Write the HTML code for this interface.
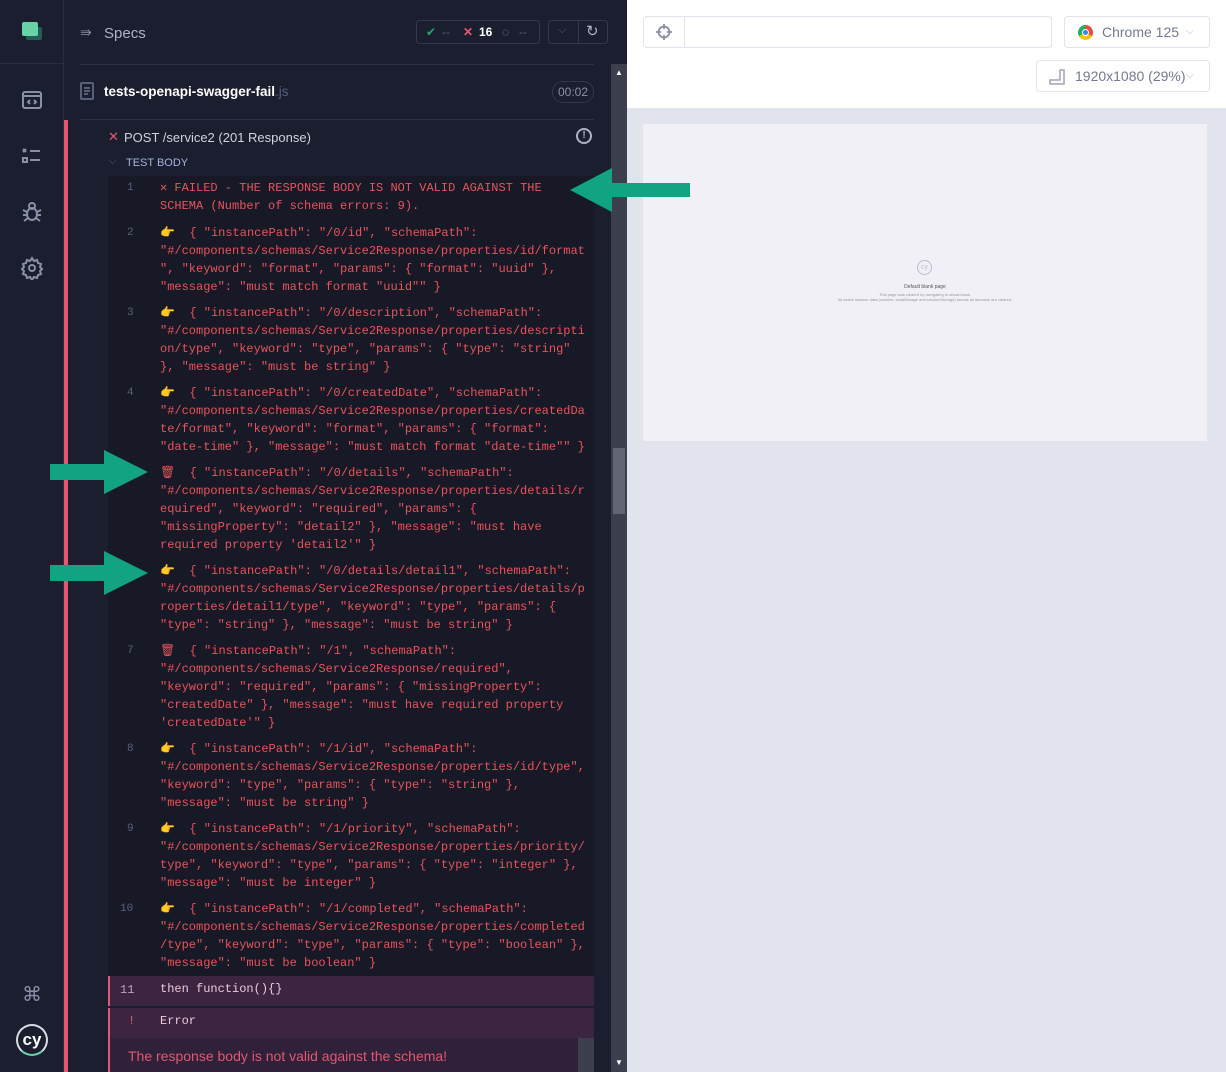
<!DOCTYPE html>
<html><head><meta charset="utf-8"><style>
*{margin:0;padding:0;box-sizing:border-box}
body{width:1226px;height:1072px;overflow:hidden;background:#fff;font-family:"Liberation Sans",sans-serif;position:relative}
.a{position:absolute}
#side{left:0;top:0;width:64px;height:1072px;background:#1b1e2e;border-right:1px solid #2a2d3e}
#panel{left:64px;top:0;width:563px;height:1072px;background:#1b1e2e}
.code{font-family:"Liberation Mono",monospace;font-size:12px;line-height:18px;color:#e8545a}
.ln{font-family:"Liberation Mono",monospace;font-size:11px;color:#5a5f7a;left:127px}
.ent{left:160px;width:430px;white-space:pre}
</style></head><body>
<div id="side" class="a">
  <div class="a" style="left:26px;top:27px;width:16px;height:13px;background:#1f5f57;border-radius:2px"></div>
  <div class="a" style="left:22px;top:22px;width:16px;height:14px;background:#69d3a7;border-radius:2px"></div>
  <div class="a" style="left:0;top:63px;width:64px;height:1px;background:#2a2d3e"></div>
  <svg class="a" style="left:20px;top:88px" width="24" height="24" viewBox="0 0 24 24" fill="none" stroke="#8a8fa8" stroke-width="2"><rect x="3" y="4" width="18" height="16" rx="2"/><path d="M3 8h18M10 12l-2 2 2 2M14 12l2 2-2 2"/></svg>
  <svg class="a" style="left:20px;top:144px" width="24" height="24" viewBox="0 0 24 24" fill="none" stroke="#8a8fa8" stroke-width="2"><path d="M3 5l3 3M6 5l-3 3M10 7h10M10 16h10"/><rect x="3" y="14" width="4" height="4"/></svg>
  <svg class="a" style="left:20px;top:200px" width="24" height="24" viewBox="0 0 24 24" fill="none" stroke="#8a8fa8" stroke-width="2"><ellipse cx="12" cy="14" rx="5" ry="6"/><circle cx="12" cy="6" r="3"/><path d="M3 10l4 2M21 10l-4 2M3 15h4M21 15h-4M4 21l4-3M20 21l-4-3"/></svg>
  <svg class="a" style="left:20px;top:256px" width="24" height="24" viewBox="0 0 24 24" fill="none" stroke="#8a8fa8" stroke-width="2"><circle cx="12" cy="12" r="3"/><path d="M12 2l2 3 3-1 1 3 3 1-1 3 2 2-2 2 1 3-3 1-1 3-3-1-2 3-2-3-3 1-1-3-3-1 1-3-2-2 2-2-1-3 3-1 1-3 3 1z"/></svg>
  <div class="a" style="left:22px;top:982px;color:#8a8fa8;font-size:20px">⌘</div>
  <div class="a" style="left:16px;top:1024px;width:32px;height:32px;border-radius:50%;border:2px solid #d8dbe8;border-bottom-color:#69d3a7;color:#fff;font-size:17px;text-align:center;line-height:27px;font-weight:bold">cy</div>
</div>
<div id="panel" class="a">
  <div class="a" style="left:16px;top:24px;color:#8a8fa8;font-size:14px">⇛</div>
  <div class="a" style="left:40px;top:25px;color:#aeb2c6;font-size:15px">Specs</div>
  <div class="a" style="left:352px;top:20px;width:124px;height:24px;border:1px solid #33374c;border-radius:3px;font-size:12px;line-height:22px;color:#5a5f7a">
    <span class="a" style="left:9px;color:#1fa971">✔</span><span class="a" style="left:25px">--</span>
    <span class="a" style="left:46px;color:#e45770;font-weight:bold">✕</span><span class="a" style="left:62px;color:#fff;font-weight:bold">16</span>
    <span class="a" style="left:85px;color:#8a8fa8">◌</span><span class="a" style="left:102px">--</span>
  </div>
  <div class="a" style="left:484px;top:20px;width:60px;height:24px;border:1px solid #33374c;border-radius:3px">
    <div class="a" style="left:29px;top:0;width:1px;height:22px;background:#33374c"></div>
    <span class="a" style="left:9px;top:3px;color:#5a5f7a;font-size:11px">⌵</span>
    <span class="a" style="left:37px;top:1px;color:#aeb2c6;font-size:15px">↻</span>
  </div>
  <div class="a" style="left:16px;top:64px;width:514px;height:1px;background:#2e3146"></div>
  <svg class="a" style="left:16px;top:82px" width="14" height="18" viewBox="0 0 14 18" fill="none" stroke="#5a5f7a" stroke-width="2"><rect x="1" y="1" width="12" height="16" rx="1"/><path d="M4 6h6M4 9h6M4 12h4"/></svg>
  <div class="a" style="left:40px;top:84px;color:#fff;font-size:13.5px;font-weight:bold">tests-openapi-swagger-fail<span style="color:#5a5f7a;font-weight:normal">.js</span></div>
  <div class="a" style="left:488px;top:81px;width:42px;height:22px;border:1px solid #33374c;border-radius:11px;color:#8a8fa8;font-size:12px;text-align:center;line-height:20px">00:02</div>
  <div class="a" style="left:16px;top:119px;width:514px;height:1px;background:#2e3146"></div>
  <div class="a" style="left:0;top:120px;width:4px;height:952px;background:#e45770"></div>
  <div class="a" style="left:44px;top:129px;color:#e45770;font-size:13px">✕</div>
  <div class="a" style="left:60px;top:130px;color:#d0d2e0;font-size:13px">POST /service2 (201 Response)</div>
  <div class="a" style="left:512px;top:128px;width:16px;height:16px;border:2px solid #aeb2c6;border-radius:50%;color:#aeb2c6;font-size:10px;font-weight:bold;text-align:center;line-height:12px">!</div>
  <div class="a" style="left:45px;top:156px;color:#5a5f7a;font-size:10px">⌵</div>
  <div class="a" style="left:62px;top:157px;color:#a4b3e2;font-size:11px">TEST BODY</div>
  <div class="a" style="left:44px;top:176px;width:486px;height:800px;background:#171927"></div>
  <div class="a" style="left:44px;top:976px;width:486px;height:30px;background:#3b2540;border-left:2px solid #e45770"></div>
  <div class="a" style="left:44px;top:1008px;width:486px;height:64px;background:#2e2139;border-left:2px solid #e45770"></div>
  <div class="a" style="left:44px;top:1008px;width:486px;height:30px;background:#3b2540;border-left:2px solid #e45770"></div>
  <div class="a" style="left:514px;top:1038px;width:16px;height:34px;background:#3c3f4e"></div>
  <div class="a" style="left:547px;top:64px;width:16px;height:1008px;background:#3c3f4e"></div>
  <div class="a" style="left:549px;top:448px;width:12px;height:66px;background:#626575"></div>
  <div class="a" style="left:551px;top:68px;color:#fff;font-size:8px">▲</div>
  <div class="a" style="left:551px;top:1058px;color:#fff;font-size:8px">▼</div>
</div>

<div class="a ln" style="top:182px">1</div>
<div class="a code ent" style="top:179px;white-space:normal">✕ FAILED -  THE RESPONSE BODY IS NOT VALID AGAINST THE SCHEMA (Number of schema errors: 9).</div>
<div class="a ln" style="top:227px">2</div>
<div class="a code ent" style="top:224px">👉  { "instancePath": "/0/id", "schemaPath":
"#/components/schemas/Service2Response/properties/id/format
", "keyword": "format", "params": { "format": "uuid" },
"message": "must match format "uuid"" }</div>
<div class="a ln" style="top:307px">3</div>
<div class="a code ent" style="top:304px">👉  { "instancePath": "/0/description", "schemaPath":
"#/components/schemas/Service2Response/properties/descripti
on/type", "keyword": "type", "params": { "type": "string"
}, "message": "must be string" }</div>
<div class="a ln" style="top:387px">4</div>
<div class="a code ent" style="top:384px">👉  { "instancePath": "/0/createdDate", "schemaPath":
"#/components/schemas/Service2Response/properties/createdDa
te/format", "keyword": "format", "params": { "format":
"date-time" }, "message": "must match format "date-time"" }</div>
<div class="a code ent" style="top:464px">🗑  { "instancePath": "/0/details", "schemaPath":
"#/components/schemas/Service2Response/properties/details/r
equired", "keyword": "required", "params": {
"missingProperty": "detail2" }, "message": "must have
required property 'detail2'" }</div>
<div class="a code ent" style="top:562px">👉  { "instancePath": "/0/details/detail1", "schemaPath":
"#/components/schemas/Service2Response/properties/details/p
roperties/detail1/type", "keyword": "type", "params": {
"type": "string" }, "message": "must be string" }</div>
<div class="a ln" style="top:645px">7</div>
<div class="a code ent" style="top:642px">🗑  { "instancePath": "/1", "schemaPath":
"#/components/schemas/Service2Response/required",
"keyword": "required", "params": { "missingProperty":
"createdDate" }, "message": "must have required property
'createdDate'" }</div>
<div class="a ln" style="top:743px">8</div>
<div class="a code ent" style="top:740px">👉  { "instancePath": "/1/id", "schemaPath":
"#/components/schemas/Service2Response/properties/id/type",
"keyword": "type", "params": { "type": "string" },
"message": "must be string" }</div>
<div class="a ln" style="top:823px">9</div>
<div class="a code ent" style="top:820px">👉  { "instancePath": "/1/priority", "schemaPath":
"#/components/schemas/Service2Response/properties/priority/
type", "keyword": "type", "params": { "type": "integer" },
"message": "must be integer" }</div>
<div class="a ln" style="top:903px;left:120px">10</div>
<div class="a code ent" style="top:900px">👉  { "instancePath": "/1/completed", "schemaPath":
"#/components/schemas/Service2Response/properties/completed
/type", "keyword": "type", "params": { "type": "boolean" },
"message": "must be boolean" }</div>
<div class="a ln" style="top:983px;left:120px;color:#c0a0b8;font-size:12px">11</div>
<div class="a code" style="left:160px;top:980px;color:#f0c8d8">then  function(){}</div>
<div class="a code" style="left:128px;top:1012px;color:#e45770">!</div>
<div class="a code" style="left:160px;top:1012px;color:#f0c8d8">Error</div>
<div class="a" style="left:128px;top:1048px;color:#e45770;font-size:14px">The response body is not valid against the schema!</div>

<div class="a" style="left:627px;top:0;width:599px;height:108px;background:#fff"></div>
<div class="a" style="left:643px;top:16px;width:409px;height:32px;border:1px solid #e1e3ed;border-radius:4px">
  <div class="a" style="left:40px;top:0;width:1px;height:30px;background:#e1e3ed"></div>
  <svg class="a" style="left:12px;top:7px" width="16" height="16" viewBox="0 0 16 16" fill="none" stroke="#8a8fa8" stroke-width="1.8"><circle cx="8" cy="8" r="5.5"/><path d="M8 0v5M8 11v5M0 8h5M11 8h5"/></svg>
</div>
<div class="a" style="left:1064px;top:16px;width:146px;height:32px;border:1px solid #e1e3ed;border-radius:4px;color:#747994;font-size:14px;line-height:30px">
  <div class="a" style="left:13px;top:8px;width:15px;height:15px;border-radius:50%;background:conic-gradient(#e74c3c 0 120deg,#f1c40f 120deg 240deg,#27ae60 240deg)"></div>
  <div class="a" style="left:17px;top:12px;width:7px;height:7px;border-radius:50%;background:#3b82f6;border:1px solid #fff"></div>
  <span class="a" style="left:37px">Chrome 125</span><span class="a" style="left:121px;font-size:10px;color:#b0b4c8">⌵</span>
</div>
<div class="a" style="left:1036px;top:60px;width:174px;height:32px;border:1px solid #e1e3ed;border-radius:4px;color:#747994;font-size:14px;line-height:30px">
  <svg class="a" style="left:12px;top:8px" width="16" height="16" viewBox="0 0 16 16" fill="none" stroke="#a0a4b8" stroke-width="1.5"><path d="M1 15h14V1h-4v10H1z"/></svg>
  <span class="a" style="left:38px">1920x1080 (29%)</span><span class="a" style="left:149px;font-size:10px;color:#b0b4c8">⌵</span>
</div>
<div class="a" style="left:627px;top:108px;width:599px;height:964px;background:#e1e3ed"></div>
<div class="a" style="left:643px;top:124px;width:564px;height:317px;background:#f0f0f6"></div>
<div class="a" style="left:917px;top:260px;width:15px;height:15px;border:1px solid #b8bcd0;border-radius:50%;font-size:7px;color:#b8bcd0;text-align:center;line-height:13px">cy</div>
<div class="a" style="left:643px;top:284px;width:564px;text-align:center;font-size:5px;color:#555">Default blank page</div>
<div class="a" style="left:643px;top:292px;width:564px;text-align:center;font-size:4px;color:#999;line-height:5px">This page was cleared by navigating to about:blank.<br>All active session data (cookies, localStorage and sessionStorage) across all domains are cleared.</div>

<svg class="a" style="left:0;top:0" width="700" height="620">
<g fill="#12a383"><polygon points="570,190 612,168 612,183 690,183 690,197 612,197 612,212"/>
<polygon points="148,472 104,450 104,464 50,464 50,480 104,480 104,494"/>
<polygon points="148,573 104,551 104,565 50,565 50,581 104,581 104,595"/></g>
</svg>
</body></html>
